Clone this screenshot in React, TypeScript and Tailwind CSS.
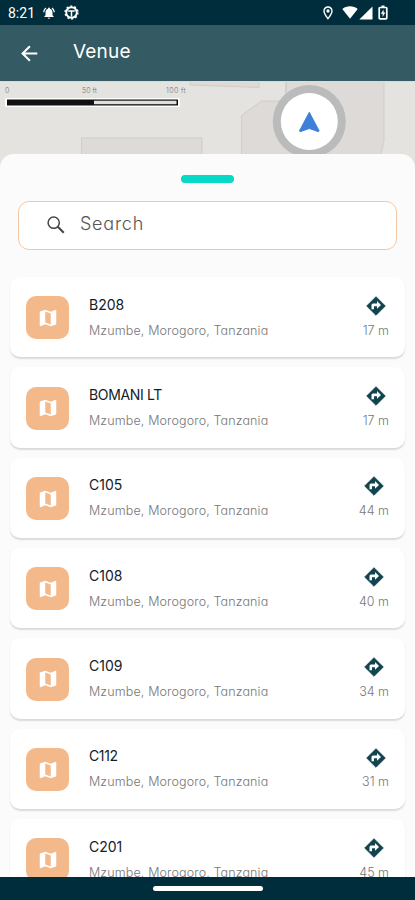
import { MdMap, MdNotificationsActive, MdOutlineLocationOn } from "react-icons/md";

const venues = [
  { name: "B208", distance: "17 m", spacing: "tracking-[0px]" },
  { name: "BOMANI LT", distance: "17 m", spacing: "tracking-[-0.35px]" },
  { name: "C105", distance: "44 m", spacing: "tracking-[0px]" },
  { name: "C108", distance: "40 m", spacing: "tracking-[0px]" },
  { name: "C109", distance: "34 m", spacing: "tracking-[0px]" },
  { name: "C112", distance: "31 m", spacing: "tracking-[-0.35px]" },
  { name: "C201", distance: "45 m", spacing: "tracking-[0px]" },
];

type Venue = (typeof venues)[number];

function StatusBar() {
  return (
    <div className="flex h-[25px] shrink-0 items-center bg-[#002d3b] pl-2 text-white">
      <span className="w-[34px] font-[Roboto] text-[14px] leading-none">8:21</span>
      <MdNotificationsActive className="size-[14px]" />
      <svg viewBox="0 0 16 16" className="ml-[8px] size-[15px]" fill="none" stroke="currentColor">
        <circle cx="8" cy="8" r="5.6" strokeWidth="2" />
        <circle cx="8" cy="8" r="6.9" strokeWidth="1.4" strokeDasharray="2.2 2.13" />
        <path d="M4.500 6.500h7M8 6.500v6" strokeWidth="1.6" />
      </svg>

      <MdOutlineLocationOn className="ml-auto size-[16px]" />
      <svg viewBox="0 0 16 13" className="ml-[6px] h-[13px] w-[16px]" fill="currentColor">
        <path d="M.3 3.1C2.3 1.2 5 .3 8 .3s5.700.9 7.700 2.800L8 12.700z" />
      </svg>
      <svg viewBox="0 0 14 14" className="ml-px h-[14px] w-[14px]" fill="currentColor">
        <path d="M13.500.5v13H.3z" />
      </svg>
      <svg viewBox="0 0 10 15" className="mr-[27px] ml-[5px] h-[15px] w-[10px]" fill="none">
        <path d="M3.500.5h3v2h-3z" fill="currentColor" />
        <rect x="1.200" y="2.500" width="7.600" height="11.300" rx=".8" stroke="currentColor" strokeWidth="1.700" />
        <path d="M5.600 4.500 2.800 8.800h1.800v3.200l2.800-4.500H5.600z" fill="currentColor" />
      </svg>
    </div>
  );
}

function MapStrip() {
  return (
    <div className="relative h-[88px] shrink-0 overflow-hidden bg-[#e4e3df]">
      <svg viewBox="0 0 415 88" className="block h-[88px] w-[415px]">
        <g fill="#dedad7" stroke="#cfcdc8" strokeWidth="1">
          <path d="M190 -2h69v8.500l-69-2.500z" />
          <path d="M81.500 57h120.500v32H81.500z" />
          <path d="M286 -2h98v62l-7 28H241.500V34.500l20-14.500H286z" />
        </g>
        <path d="M286 0v20h-1" stroke="#cbc9c4" fill="none" />
        <path d="M0 0.500h415" stroke="#d8dcdb" />
        <rect x="5" y="17" width="175" height="9" rx="1.500" fill="#fff" />
        <rect x="7" y="18.500" width="171" height="6" fill="#111" />
        <rect x="94" y="19.700" width="82.500" height="3.500" fill="#dfdfdc" />
        <circle cx="309.300" cy="40.500" r="36.500" fill="#babbbb" />
        <circle cx="309.300" cy="40.500" r="28.500" fill="#fff" />
        <path
          d="M309.300 31.300 319.200 50l-.7.7-9.200-3.200-9.200 3.200-.7-.7z"
          fill="#3d80da"
          stroke="#3d80da"
          strokeLinejoin="round"
        />
      </svg>
      <div className="absolute top-[5px] left-[5px] font-[Inter] text-[7px] leading-[9px] font-light text-[#777]">
        0
      </div>
      <div className="absolute top-[5px] left-[82px] font-[Inter] text-[7px] leading-[9px] font-light text-[#777]">
        50 ft
      </div>
      <div className="absolute top-[5px] left-[166px] font-[Inter] text-[7px] leading-[9px] font-light tracking-[0.400px] text-[#777]">
        100 ft
      </div>
    </div>
  );
}

function DirectionIcon() {
  return (
    <svg viewBox="0 0 20 20" className="size-[20px]">
      <path
        d="M10 .7 19.300 10 10 19.300.7 10z"
        fill="#124450"
        stroke="#124450"
        strokeWidth=".8"
        strokeLinejoin="round"
      />
      <path d="M5.500 13.300V9Q5.500 7.500 7 7.500H11V5L15 8.900 11 12.800V10.200H8v3.100z" fill="#fff" />
    </svg>
  );
}

function VenueCard({ name, distance, spacing }: Venue) {
  return (
    <div className="flex h-[80.350px] shrink-0 rounded-[10px] bg-white pr-[16px] pl-[16.400px] shadow-[0_1.500px_1.500px_rgba(0,0,0,0.13)]">
      <div className="mt-[19.400px] flex size-[43px] items-center justify-center rounded-[10px] bg-[#f4b98a] text-white">
        <MdMap className="size-[22px]" />
      </div>

      <div className="ml-[19.600px] pt-[17.600px]">
        <p className={`text-[14px] leading-[20px] text-[#10212b] ${spacing}`}>{name}</p>
        <p className="mt-[6px] text-[12.500px] leading-[20px] font-light tracking-[0.130px] whitespace-nowrap text-[#777]">
          Mzumbe, Morogoro, Tanzania
        </p>
      </div>

      <div className="ml-auto flex flex-col items-center pt-[18.800px]">
        <DirectionIcon />
        <p className="mt-[4.800px] text-[12.500px] leading-[20px] font-light whitespace-nowrap text-[#777]">
          {distance}
        </p>
      </div>
    </div>
  );
}

export default function App() {
  return (
    <div className="flex h-[900px] w-[415px] flex-col overflow-hidden bg-[#fafafa] font-[Inter,sans-serif] [font-feature-settings:'cv11']">
      <StatusBar />

      <header className="flex h-[56px] shrink-0 items-center bg-[#345a64] pl-[21px] text-white">
        <svg viewBox="0 0 17 17" className="size-[17px]" fill="none" stroke="currentColor" strokeWidth="2.100">
          <path d="M16.300 8.500H2M8.900 1.200 1.600 8.500l7.300 7.300" />
        </svg>
        <h1 className="mb-[3px] ml-[35px] text-[19px] leading-none tracking-[0.200px]">Venue</h1>
      </header>

      <MapStrip />

      {/* Bottom sheet */}
      <main className="relative -mt-[15px] flex min-h-0 flex-1 flex-col overflow-hidden rounded-t-[14px] bg-[#fbfbfb]">
        <div className="mt-[21px] ml-[181px] h-[8px] w-[53px] shrink-0 rounded-full bg-[#08d8c6]" />

        <div className="mx-[18px] mt-[18px] flex h-[49px] shrink-0 items-center rounded-[11px] border-[1.500px] border-[#f3c7a5] bg-white pl-[28px]">
          <svg viewBox="0 0 18 18" className="mb-[2px] size-[18px]" fill="none" stroke="#444">
            <circle cx="6.700" cy="6.700" r="5.600" strokeWidth="1.500" />
            <path d="m10.800 10.800 6 6" strokeWidth="2" />
          </svg>
          <span className="mb-[4px] ml-[15px] text-[18px] leading-none font-light tracking-[0.750px] text-[#555]">
            Search
          </span>
        </div>

        <div className="mt-[27px] flex flex-col gap-[10px] px-[10px]">
          {venues.map((venue) => (
            <VenueCard key={venue.name} {...venue} />
          ))}
        </div>
      </main>

      <footer className="flex h-[23px] shrink-0 justify-center bg-[#002d3b] pt-[9px]">
        <div className="h-[5px] w-[110px] rounded-full bg-white" />
      </footer>
    </div>
  );
}
